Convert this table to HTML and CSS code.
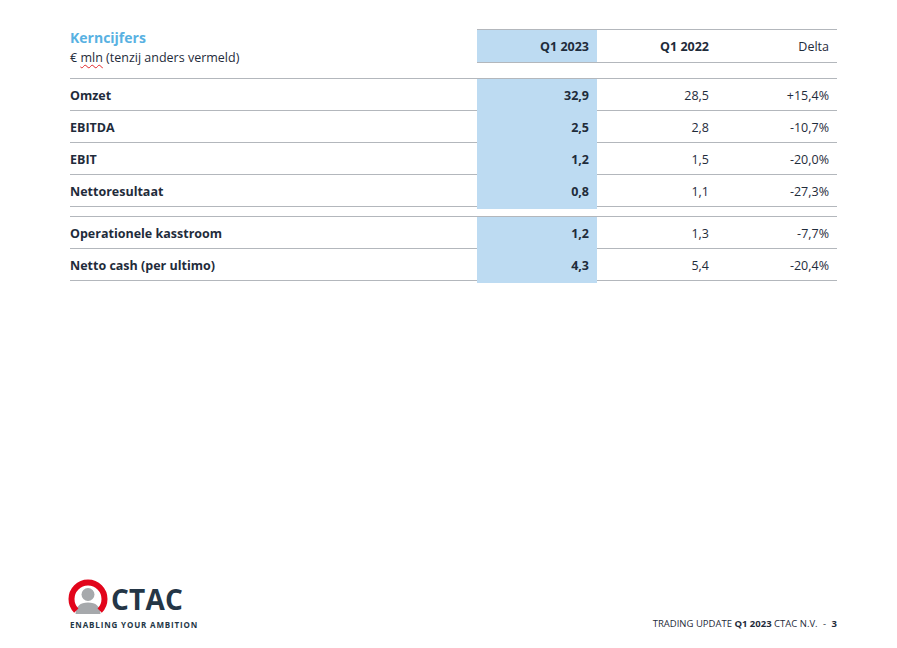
FILE: index.html
```html
<!DOCTYPE html>
<html lang="nl">
<head>
<meta charset="utf-8">
<title>Kerncijfers</title>
<link rel="stylesheet" href="styles.css">
</head>
<body>
<div class="page">
  <div class="table">
    <div class="head">
      <div class="title">
        <div class="title-main">Kerncijfers</div>
        <div class="title-sub">€ <span class="spell">mln</span> (tenzij anders vermeld)</div>
      </div>
      <div class="hcell hl bold">Q1 2023</div>
      <div class="hcell bold">Q1 2022</div>
      <div class="hcell">Delta</div>
    </div>
    <div class="group">
      <div class="row"><div class="label">Omzet</div><div class="cell hl bold">32,9</div><div class="cell">28,5</div><div class="cell">+15,4%</div></div>
      <div class="row"><div class="label">EBITDA</div><div class="cell hl bold">2,5</div><div class="cell">2,8</div><div class="cell">-10,7%</div></div>
      <div class="row"><div class="label">EBIT</div><div class="cell hl bold">1,2</div><div class="cell">1,5</div><div class="cell">-20,0%</div></div>
      <div class="row"><div class="label">Nettoresultaat</div><div class="cell hl bold">0,8</div><div class="cell">1,1</div><div class="cell">-27,3%</div></div>
    </div>
    <div class="group second">
      <div class="row"><div class="label">Operationele kasstroom</div><div class="cell hl bold">1,2</div><div class="cell">1,3</div><div class="cell">-7,7%</div></div>
      <div class="row"><div class="label">Netto cash (per ultimo)</div><div class="cell hl bold">4,3</div><div class="cell">5,4</div><div class="cell">-20,4%</div></div>
    </div>
  </div>

  <div class="footer">
    <div class="logo">
      <div class="logo-top">
        <svg class="logo-mark" width="40" height="40" viewBox="0 0 40 40">
          <circle cx="20" cy="15.5" r="6.5" fill="#a6a9ac"/>
          <path d="M7.5 35 Q8 23.5 20 23.5 Q32 23.5 32.5 35 Z" fill="#a6a9ac"/>
          <path d="M8.3 31.7 A16.5 16.5 0 1 1 31.7 31.7" fill="none" stroke="#e2051b" stroke-width="6"/>
        </svg>
        <span class="logo-word">CTAC</span>
      </div>
      <div class="logo-tag">ENABLING YOUR AMBITION</div>
    </div>
    <div class="pager">TRADING UPDATE <b>Q1 2023</b> CTAC N.V. <span class="sep">-</span> <b>3</b></div>
  </div>
</div>
</body>
</html>
```

FILE: styles.css
```css
html, body {
  margin: 0;
  padding: 0;
  background: #ffffff;
}

body {
  font-family: "Open Sans", "Noto Sans", "Liberation Sans", sans-serif;
  color: #1f2c3b;
  width: 897px;
  height: 648px;
  overflow: hidden;
}

.page {
  position: relative;
  width: 897px;
  height: 648px;
}

.table {
  margin-left: 70px;
  padding-top: 29px;
  width: 767px;
  font-size: 12.5px;
}

.head {
  display: grid;
  grid-template-columns: 407px 120px 120px 120px;
  height: 50px;
  border-bottom: 1px solid #b3b7bc;
  box-sizing: border-box;
  align-items: start;
}

.title {
  padding-top: 0;
}

.title-main {
  color: #58b1e2;
  font-weight: 700;
  font-size: 14px;
  line-height: 17px;
}

.title-sub {
  font-size: 12.5px;
  line-height: 18px;
  margin-top: 3px;
}

.spell {
  text-decoration: underline wavy #e0262b;
  text-decoration-thickness: 1px;
  text-underline-offset: 2px;
}

.hcell {
  height: 34px;
  border-top: 1px solid #b3b7bc;
  border-bottom: 1px solid #b3b7bc;
  box-sizing: border-box;
  text-align: right;
  padding-right: 8px;
  line-height: 34px;
}

.hl {
  background: #bddbf2;
}

.bold {
  font-weight: 700;
}

.group.second {
  margin-top: 9px;
  border-top: 1px solid #b3b7bc;
}

.row {
  display: grid;
  grid-template-columns: 407px 120px 120px 120px;
  height: 32px;
  border-bottom: 1px solid #b3b7bc;
  box-sizing: border-box;
}

.label {
  font-weight: 700;
  line-height: 34px;
}

.cell {
  text-align: right;
  padding-right: 8px;
  line-height: 34px;
}

.footer {
  position: absolute;
  left: 68px;
  right: 60px;
  top: 579px;
  display: flex;
  justify-content: space-between;
  align-items: flex-end;
}

.logo-top {
  display: flex;
  align-items: center;
  height: 40px;
}

.logo-mark {
  display: block;
}

.logo-word {
  font-family: "Open Sans", "Noto Sans", sans-serif;
  font-weight: 700;
  font-size: 28px;
  color: #243646;
  margin-left: 3px;
  letter-spacing: 0.2px;
  line-height: 40px;
}

.logo-tag {
  font-weight: 700;
  font-size: 8px;
  letter-spacing: 0.85px;
  color: #243646;
  margin-left: 2px;
  line-height: 11px;
}

.pager {
  font-size: 9.5px;
  color: #1f2c3b;
  line-height: 12px;
}

.pager .sep {
  margin: 0 3px;
}
```
